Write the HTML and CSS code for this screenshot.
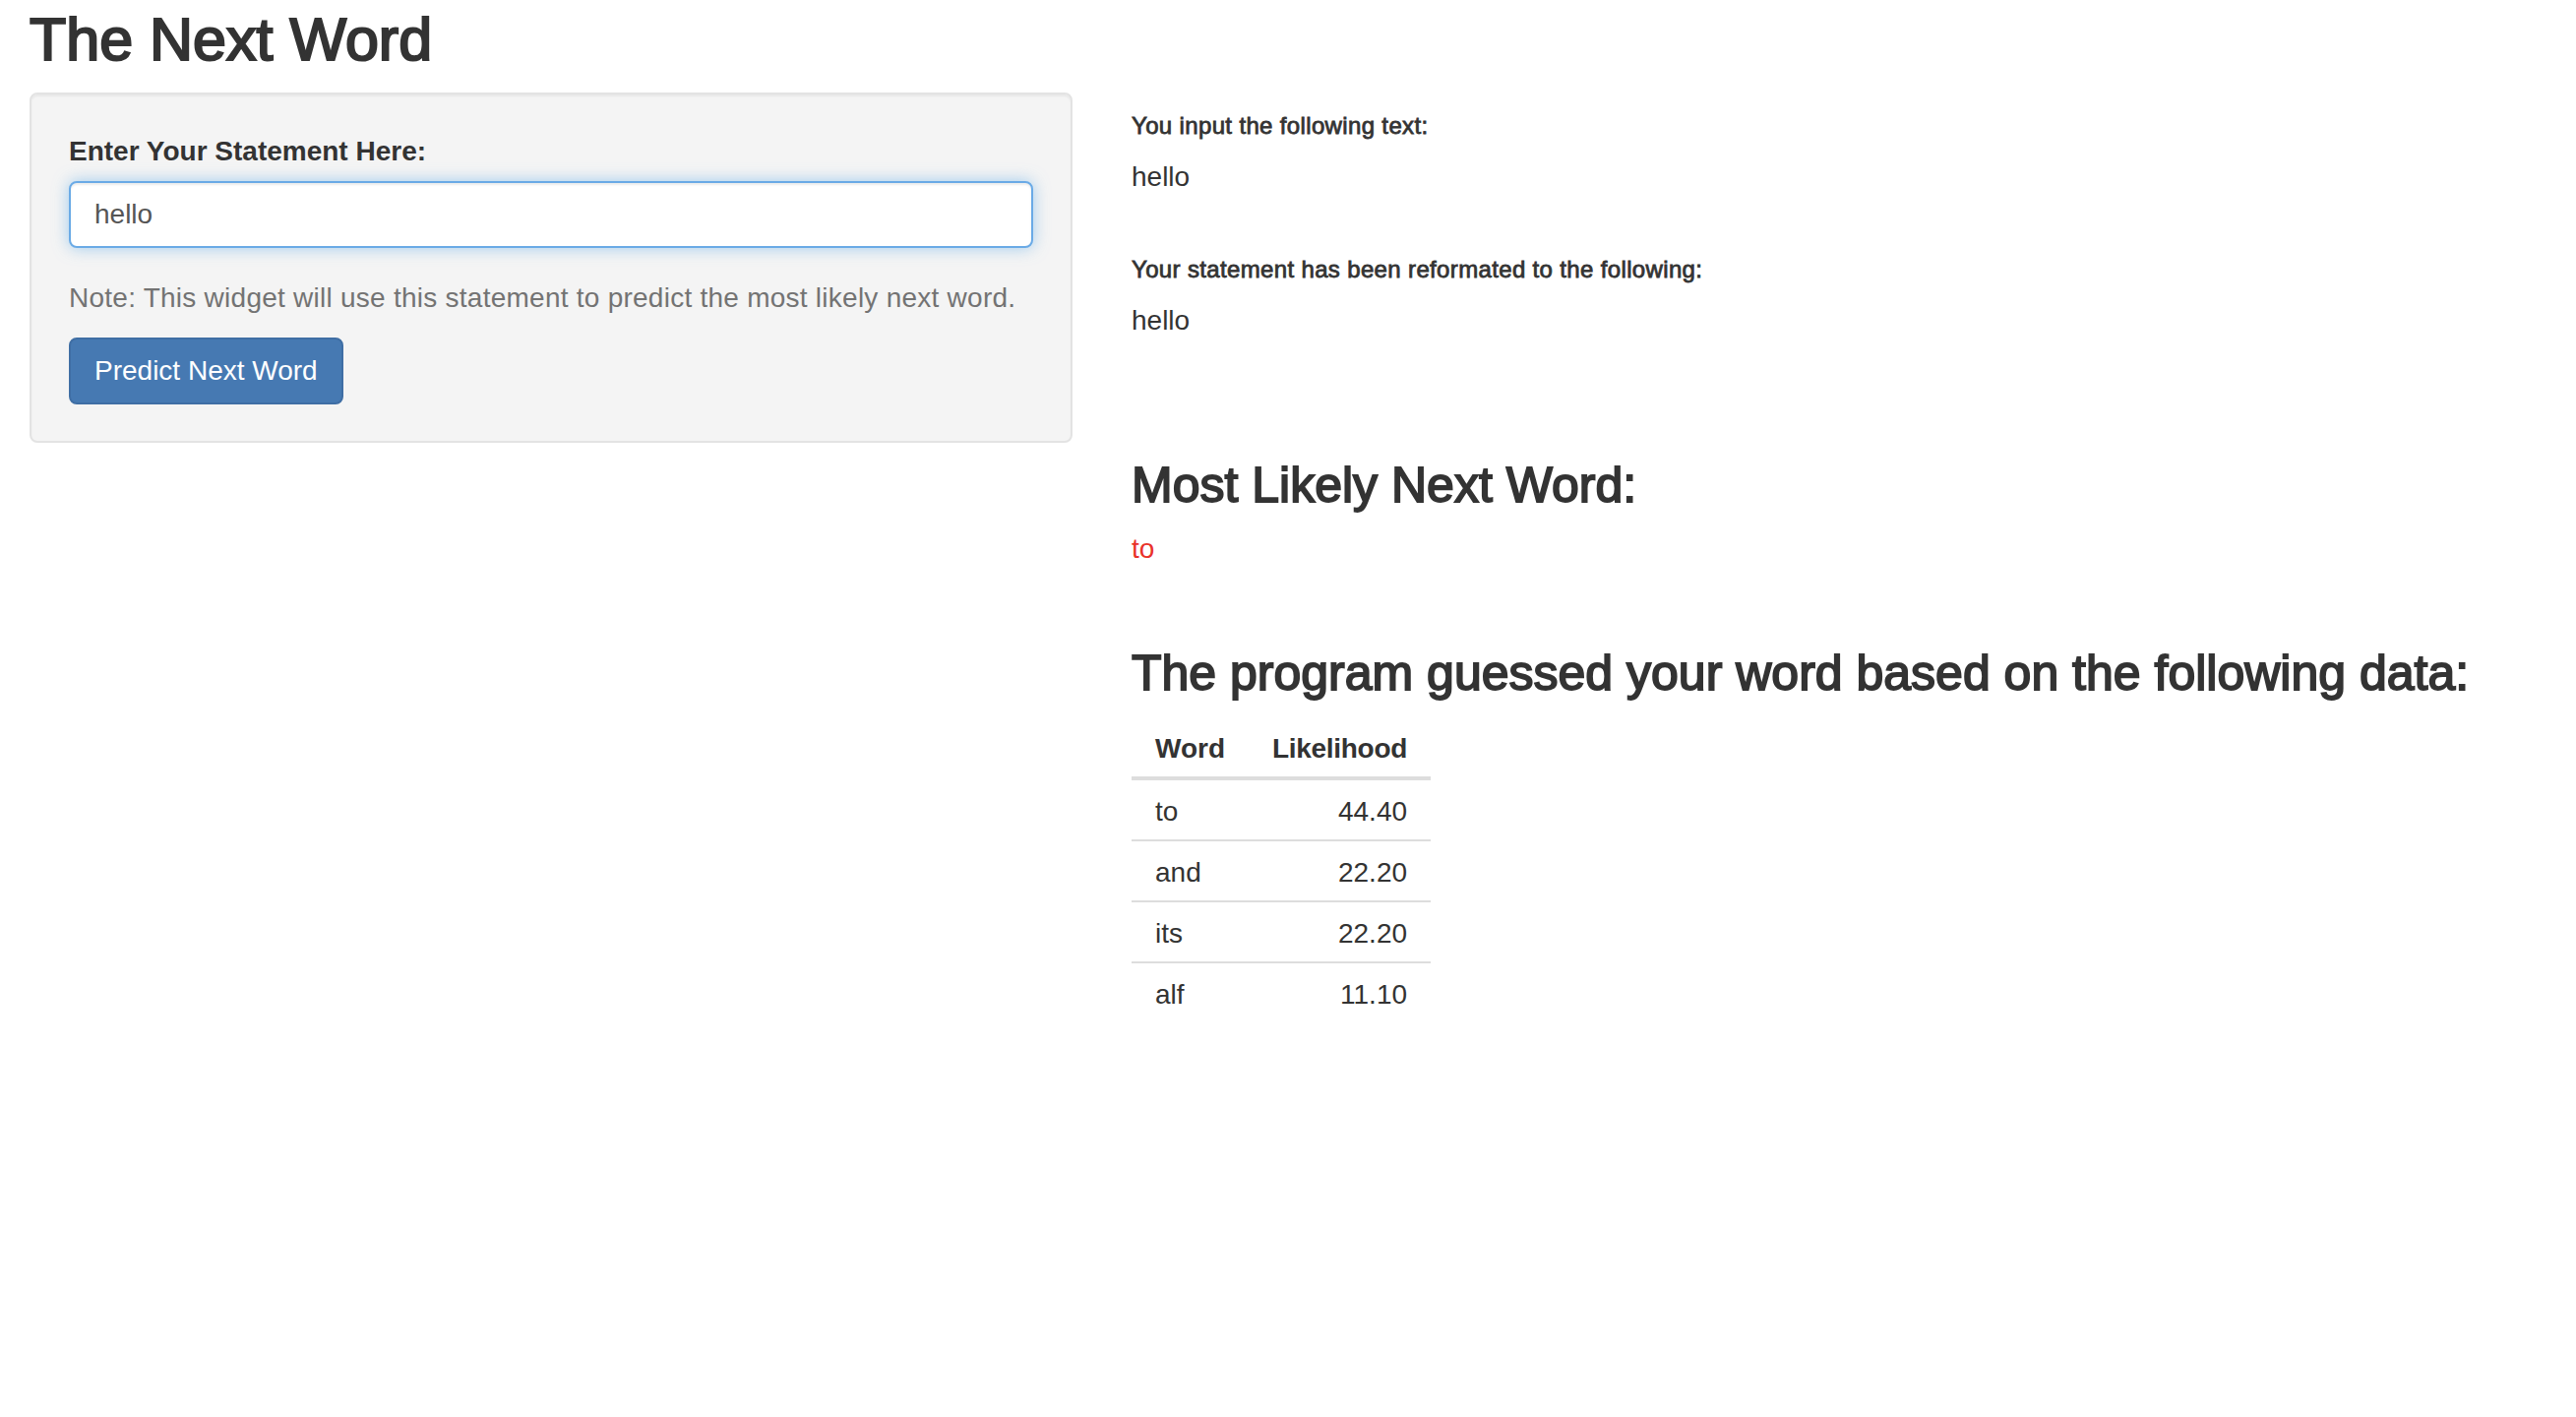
FILE: index.html
```html
<!DOCTYPE html>
<html lang="en">
<head>
<meta charset="utf-8">
<title>The Next Word</title>
<link rel="stylesheet" href="styles.css">
</head>
<body>
<div class="page">
  <h2 class="app-title">The Next Word</h2>
  <div class="layout">
    <aside class="sidebar">
      <div class="well">
        <label class="field-label" for="statement">Enter Your Statement Here:</label>
        <input id="statement" class="text-input" type="text" value="hello">
        <p class="note">Note: This widget will use this statement to predict the most likely next word.</p>
        <button class="btn-primary" type="button">Predict Next Word</button>
      </div>
    </aside>
    <main class="main">
      <h6 class="sub-heading">You input the following text:</h6>
      <div class="out-text">hello</div>
      <h6 class="sub-heading sub-heading-second">Your statement has been reformated to the following:</h6>
      <div class="out-text">hello</div>
      <h3 class="section-heading section-heading-first">Most Likely Next Word:</h3>
      <div class="prediction">to</div>
      <h3 class="section-heading section-heading-second">The program guessed your word based on the following data:</h3>
      <table class="data-table">
        <thead>
          <tr><th class="col-word">Word</th><th class="col-num col-head-tight">Likelihood</th></tr>
        </thead>
        <tbody>
          <tr><td class="col-word">to</td><td class="col-num">44.40</td></tr>
          <tr><td class="col-word">and</td><td class="col-num">22.20</td></tr>
          <tr><td class="col-word">its</td><td class="col-num">22.20</td></tr>
          <tr><td class="col-word">alf</td><td class="col-num">11.10</td></tr>
        </tbody>
      </table>
    </main>
  </div>
</div>
</body>
</html>
```

FILE: styles.css
```css
* {
  box-sizing: border-box;
}

html, body {
  margin: 0;
  padding: 0;
  background: #ffffff;
}

body {
  font-family: "Liberation Sans", Helvetica, Arial, sans-serif;
  font-size: 28px;
  line-height: 40px;
  color: #333333;
}

.page {
  padding: 0 30px;
}

.app-title {
  margin: 6px 0 20px;
  font-size: 61px;
  line-height: 68px;
  font-weight: 500;
  color: #333333;
  -webkit-text-stroke: 2.2px #333333;
}

.layout {
  display: flex;
  align-items: flex-start;
  gap: 60px;
}

.sidebar {
  flex: none;
  width: 1060px;
}

.well {
  background: #f4f4f4;
  border: 2px solid #e3e3e3;
  border-radius: 8px;
  padding: 38px 38px 37px;
  box-shadow: inset 0 2px 2px rgba(0, 0, 0, 0.05);
}

.field-label {
  display: block;
  font-weight: 700;
  font-size: 28px;
  line-height: 40px;
  margin: 0 0 10px;
  color: #333333;
}

.text-input {
  display: block;
  width: 100%;
  height: 68px;
  padding: 12px 24px;
  font-family: "Liberation Sans", Helvetica, Arial, sans-serif;
  font-size: 28px;
  line-height: 40px;
  color: #555555;
  background: #ffffff;
  border: 2px solid #6aaae6;
  border-radius: 8px;
  outline: none;
  box-shadow: inset 0 2px 2px rgba(0, 0, 0, 0.075), 0 0 16px rgba(102, 175, 233, 0.6);
}

.note {
  margin: 31px 0 0;
  color: #737373;
  letter-spacing: 0.25px;
}

.btn-primary {
  display: inline-block;
  margin-top: 20px;
  height: 68px;
  padding: 12px 24px;
  font-family: "Liberation Sans", Helvetica, Arial, sans-serif;
  font-size: 28px;
  line-height: 40px;
  color: #ffffff;
  background: #4679b2;
  border: 2px solid #3f6ea4;
  border-radius: 8px;
  cursor: pointer;
}

.main {
  flex: 1;
  min-width: 0;
}

.sub-heading {
  margin: 21px 0 19px;
  font-size: 24px;
  line-height: 26px;
  font-weight: 500;
  letter-spacing: 0.35px;
  color: #333333;
  -webkit-text-stroke: 0.8px #333333;
}

.sub-heading-second {
  margin-top: 61px;
}

.out-text {
  margin: 0;
}

.section-heading {
  margin: 0;
  font-size: 50px;
  line-height: 55px;
  font-weight: 500;
  color: #333333;
  -webkit-text-stroke: 1.8px #333333;
}

.section-heading-first {
  margin-top: 120px;
}

.section-heading-second {
  margin-top: 79px;
}

.prediction {
  margin-top: 17px;
  color: #e9322a;
}

.data-table {
  margin-top: 17px;
  border-collapse: separate;
  border-spacing: 0;
}

.data-table th,
.data-table td {
  padding: 12px 24px 8px;
  line-height: 40px;
  font-size: 28px;
}

.data-table th {
  font-weight: 700;
  border-bottom: 4px solid #dddddd;
}

.data-table td {
  border-top: 2px solid #dddddd;
}

.data-table tbody tr:first-child td {
  border-top: 0;
}

.col-word {
  text-align: left;
}

.col-num {
  text-align: right;
}

.col-head-tight {
  letter-spacing: -0.3px;
}
```
